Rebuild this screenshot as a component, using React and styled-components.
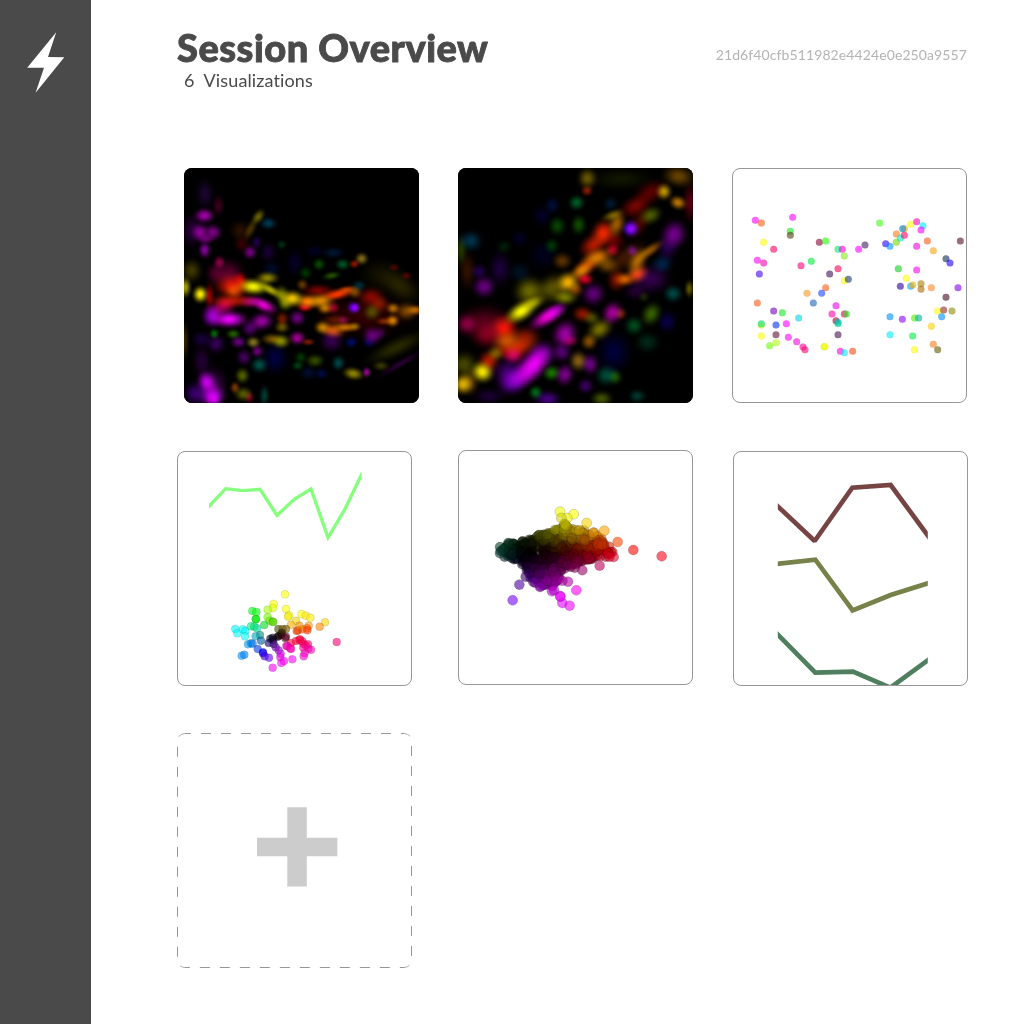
import React from 'react';
import styled, { createGlobalStyle } from 'styled-components';

const GlobalStyle = createGlobalStyle`
  * { box-sizing: border-box; }
  body { margin: 0; background: #fff; font-family: Lato, "Open Sans", sans-serif; color: #4a4a4a; }
`;

const Page = styled.div`
  display: flex;
  height: 1024px;
  overflow: hidden;
`;
const Sidebar = styled.nav`
  width: 91px;
  flex: none;
  padding: 32px 0 0 27px;
  background: #4a4a4a;
`;
const Logo = styled.svg`
  display: block;
  width: 38px;
  height: 61px;
`;
const Main = styled.main`
  flex: 1;
  padding: 25px 57px 0 86px;
`;
const Header = styled.header`
  display: flex;
  justify-content: space-between;
  height: 143px;
`;
const Title = styled.h1`
  margin: 0;
  font-size: 38px;
  line-height: 44px;
  font-weight: 900;
  letter-spacing: 0.5px;
  -webkit-text-stroke: 0.9px #4a4a4a;
  white-space: nowrap;
`;
const Count = styled.p`
  display: flex;
  gap: 9px;
  margin: 0 0 0 7px;
  font-size: 18px;
  line-height: 22px;
  letter-spacing: 0.12px;
`;
const SessionId = styled.span`
  padding: 21px 1px 0 0;
  font-size: 14px;
  line-height: 18px;
  letter-spacing: 0.1px;
  color: #b4b4b4;
`;
const Gallery = styled.section`
  display: grid;
  grid-template-columns: 281px 274px 236px;
  grid-template-rows: 282px 283px 235px;
  width: 791px;
`;
const Tile = styled.article`
  width: 235px;
  height: 235px;
  margin: ${(p) => p.$top || 0}px 0 0 ${(p) => p.$left || 0}px;
  border-radius: 8px;
  overflow: hidden;
`;
const ImageTile = styled(Tile)`
  background: #000;
`;
const ChartTile = styled(Tile)`
  border: 1px solid #979797;
  background: #fff;
`;
const Drawing = styled.svg`
  display: block;
  width: 100%;
  height: 100%;
`;
const Blob = styled.ellipse`
  mix-blend-mode: screen;
`;

/* x, y, rx, ry, angle, colour */
const fishBlobs = [
  [75,90,22,35,0,'#1b0530'],[115,125,14,25,0,'#3c001c'],[73,155,24,18,0,'#a000a8'],[60,205,20,22,0,'#8a0094'],[98,205,22,20,0,'#7c0085'],[78,225,20,12,0,'#600068'],[74,258,15,20,0,'#84009a'],[35,200,25,40,0,'#250034'],
  [235,158,13,20,35,'#666000'],[212,195,12,28,25,'#443100'],[180,200,25,24,0,'#291000'],[265,178,20,15,0,'#003752'],[210,265,17,17,0,'#71007e'],[230,235,12,17,0,'#200047'],[265,265,20,24,0,'#180034'],[185,240,20,20,0,'#330000'],[118,295,14,16,0,'#84003f'],[145,325,38,32,0,'#52002a'],[105,330,23,27,0,'#420020'],
  [35,320,25,28,0,'#3c3700'],[16,370,14,24,0,'#a69d00'],[61,391,18,20,0,'#fff000'],[88,395,12,30,0,'#900000'],[157,365,43,30,0,'#df1600'],[162,380,22,18,0,'#a84000'],[160,410,58,17,0,'#a81500'],[180,350,16,20,0,'#b50000'],
  [220,368,36,19,5,'#f6f600'],[262,342,27,15,0,'#8c8400'],[272,378,30,12,30,'#aaa500'],[306,393,18,23,-15,'#777b00'],[315,420,17,17,0,'#5d6800'],[337,404,27,20,0,'#f0c600'],[382,413,27,18,0,'#ff7700'],[422,411,32,18,0,'#d88400'],[367,362,14,14,0,'#643600'],[415,380,38,16,0,'#7a0500'],[471,391,43,14,-12,'#ff3700'],[500,377,22,10,-10,'#a83300'],[435,433,18,14,0,'#b86c00'],[375,430,18,11,0,'#d10016'],
  [250,423,35,16,25,'#e600d1'],[210,414,24,14,0,'#84005e'],[97,456,25,27,0,'#9c00d0'],[147,466,42,20,0,'#ed00ff'],[122,436,32,15,0,'#7b0048'],[135,420,28,16,0,'#a90028'],[245,472,28,21,-10,'#9800a1'],[210,493,20,20,0,'#4e0066'],
  [352,462,20,19,0,'#6b0078'],[352,522,20,17,0,'#a20091'],[385,534,16,9,0,'#791b00'],[307,465,16,18,0,'#721a00'],[306,490,18,14,0,'#605000'],[275,525,24,14,0,'#704c00'],[303,532,22,17,0,'#858900'],[220,535,17,14,0,'#82721b'],[175,534,19,15,0,'#65007c'],[232,562,15,15,0,'#6a0078'],
  [460,431,15,15,0,'#920028'],[466,469,32,15,0,'#4c1700'],[427,490,19,16,0,'#b27400'],[457,500,30,17,10,'#d05100'],[496,490,31,12,0,'#bd6b00'],[525,487,14,11,0,'#664f00'],[521,431,16,15,0,'#5800f5'],[526,431,9,10,0,'#5000c0'],[525,385,17,15,0,'#734200'],[574,399,33,24,0,'#810900'],[600,421,24,20,0,'#681500'],[576,444,21,20,0,'#304900'],[639,433,16,14,0,'#a96800'],[638,470,16,15,0,'#ce7b00'],[613,472,20,10,0,'#732500'],[680,442,28,22,0,'#794300'],[707,438,22,12,0,'#b05800'],
  [550,455,110,52,0,'#300000'],[455,530,29,28,0,'#37004e'],[490,468,14,11,0,'#530041'],[577,515,23,22,0,'#65007d'],[603,507,14,15,0,'#30003c'],[514,535,15,14,0,'#000b62'],[566,536,16,14,0,'#000443'],[537,365,17,14,0,'#002a36'],
  [417,301,15,15,0,'#064900'],[455,335,22,10,-10,'#204f00'],[488,301,18,14,0,'#005022'],[523,300,12,11,0,'#8e1200'],[545,284,16,15,0,'#80681a'],[460,266,25,14,0,'#001532'],[377,327,15,16,0,'#003400'],[305,242,12,12,0,'#002c12'],[405,260,25,15,0,'#000023'],[345,295,22,32,0,'#060024'],[275,315,23,20,0,'#000a26'],[610,335,55,38,10,'#161300'],[665,370,50,32,30,'#232000'],[642,310,13,9,0,'#440000'],[680,335,13,10,0,'#4b0000'],
  [103,509,12,12,0,'#006800'],[160,510,17,12,0,'#245b00'],[108,540,23,23,0,'#330056'],[65,525,24,20,0,'#180039'],[192,580,18,20,0,'#43005e'],[65,592,22,40,0,'#220033'],[238,603,20,19,0,'#004f45'],[285,583,32,37,0,'#00003f'],[362,580,15,15,0,'#033600'],[405,590,22,16,0,'#304b00'],[475,597,16,18,0,'#004546'],[425,629,17,14,0,'#000a41'],[385,627,20,16,0,'#000e31'],[353,605,15,12,0,'#003c10'],[520,629,25,15,10,'#8e8400'],[560,625,10,13,0,'#9b0095'],[603,606,20,12,0,'#373600'],[650,550,78,22,-25,'#282800'],[660,600,60,9,-30,'#280032'],
  [187,635,17,19,0,'#536000'],[165,671,12,15,0,'#793600'],[190,690,21,18,0,'#535900'],[208,700,12,15,0,'#680017'],[253,695,12,25,0,'#003c31'],[80,655,22,27,-20,'#bf00e8'],[97,697,30,28,0,'#b000e2'],[100,705,17,17,0,'#9000a9'],[48,688,30,28,0,'#39006d'],[100,665,32,45,0,'#400050'],[15,530,10,45,0,'#352300'],
];
const zoomBlobs = [
  [400,43,22,24,0,'#675300'],[399,80,14,13,0,'#811b00'],[368,116,19,18,0,'#005825'],[310,186,20,22,0,'#074300'],[374,183,18,23,0,'#104a00'],[293,245,17,18,0,'#003400'],[295,124,18,20,0,'#000c35'],[265,155,24,24,0,'#000026'],[470,119,17,17,0,'#00172e'],[500,45,75,25,0,'#101500'],[674,37,37,25,10,'#664100'],[630,83,18,19,0,'#b49400'],[672,116,20,16,20,'#bb7400'],[708,115,17,45,0,'#53000f'],[590,154,27,20,-25,'#475900'],[545,127,38,24,-25,'#760500'],[590,85,40,26,-25,'#590000'],
  [660,212,30,34,20,'#72008a'],[640,253,24,30,0,'#210044'],[625,300,25,22,0,'#002145'],[530,194,20,20,0,'#6505ff'],[530,195,12,12,0,'#3a00a0'],[488,180,20,32,15,'#9b5b00'],[475,154,25,12,-20,'#665600'],[448,207,27,31,20,'#ee2400'],[418,242,36,24,-35,'#af1700'],[475,258,17,16,0,'#aa001f'],[432,279,35,21,-15,'#cb6900'],[398,306,40,20,-38,'#c34600'],[382,321,25,16,-30,'#a75d00'],[342,355,27,24,-30,'#f0ad00'],[393,345,20,15,0,'#d60024'],[459,303,27,20,0,'#684000'],[482,230,25,22,0,'#5c0000'],[515,280,55,27,-35,'#401800'],[550,293,20,35,30,'#ab6400'],[587,260,36,13,-35,'#8d5100'],[512,346,22,16,0,'#ce5b00'],[550,331,28,20,-28,'#e43d00'],[488,348,22,27,0,'#7c1300'],[535,260,14,14,0,'#550072'],[555,180,22,36,30,'#440600'],
  [325,291,23,20,0,'#593100'],[50,231,27,24,0,'#003149'],[20,260,15,35,0,'#203400'],[40,320,20,45,0,'#311100'],[150,248,18,16,0,'#001c07'],[197,225,22,20,0,'#000020'],[137,315,26,40,0,'#1c003c'],[90,368,27,26,0,'#65007d'],[75,322,19,18,0,'#20004b'],[197,325,28,24,0,'#001022'],[267,274,35,35,0,'#00001c'],
  [223,380,35,32,-40,'#605d00'],[263,388,47,32,-15,'#282500'],[300,368,35,30,-30,'#4d4600'],[333,400,29,18,0,'#747700'],[365,375,18,18,0,'#853b00'],[202,442,40,21,-32,'#fffa00'],[238,417,28,15,-25,'#7e7b00'],[280,458,47,19,-32,'#e600cd'],[300,444,30,16,-30,'#8500a6'],[332,510,28,33,30,'#9b00a3'],[348,530,20,15,0,'#770034'],[323,565,23,22,0,'#540070'],[418,390,28,27,-30,'#5e0075'],[385,450,23,19,0,'#8a1400'],[475,447,23,27,25,'#a50099'],[500,449,15,15,0,'#662200'],[437,496,31,23,-30,'#777000'],[405,533,19,19,0,'#834d00'],[413,462,20,17,0,'#474900'],[373,591,21,24,0,'#835f13'],[408,601,20,25,0,'#6a0082'],[332,632,22,26,15,'#780086'],[395,666,19,19,0,'#38005d'],
  [657,389,22,20,0,'#004644'],[706,374,11,20,0,'#5c5500'],[592,450,22,28,30,'#366000'],[540,485,22,22,0,'#004a1b'],[640,473,23,26,0,'#070045'],[580,535,28,24,0,'#002816'],[480,565,40,48,0,'#000039'],[457,634,25,24,0,'#004a36'],[484,639,17,18,0,'#1b4800'],[443,704,25,18,0,'#405300'],[550,696,20,16,0,'#00372c'],[590,345,45,34,0,'#31004b'],[544,382,27,22,0,'#21002f'],[570,399,13,13,0,'#152400'],
  [92,477,60,42,0,'#590019'],[38,480,25,25,0,'#750038'],[100,515,37,31,0,'#700014'],[150,493,32,32,0,'#f51500'],[157,530,34,23,-15,'#b64c00'],[197,545,46,24,-15,'#b92700'],[213,515,35,22,0,'#711000'],[170,560,40,22,0,'#830000'],[178,575,25,20,0,'#a90058'],[125,568,20,18,0,'#635900'],[104,592,24,25,0,'#b51a00'],[240,600,55,30,-50,'#e600f5'],[215,625,45,25,-45,'#8000a0'],[178,653,38,29,-25,'#7100b8'],[165,625,40,32,0,'#40006d'],[265,570,32,28,0,'#40006d'],[85,624,26,24,20,'#f8e900'],[26,661,22,23,0,'#d4a600'],[30,602,32,30,0,'#454500'],[45,655,22,29,0,'#6e4800'],[293,627,20,18,-20,'#187200'],[245,685,16,16,0,'#006615'],[281,705,31,20,0,'#43007c'],[105,697,36,20,0,'#1a0030'],
];

/* x, y, fill */
const mapDots = [
  [82,169,'#f0f'],[100,177,'#ff5a16'],[194,160,'#f0f'],[187,202,'#10ef20'],[187,214,'#554016'],[107,235,'#ff0'],[137,256,'#ff0060'],[274,235,'#8b0030'],[293,231,'#20ff00'],[330,256,'#00ef77'],[343,256,'#ff00d8'],[349,276,'#80ef10'],[392,256,'#f0f'],[411,243,'#412060'],[88,289,'#f0f'],[107,297,'#ff00b0'],[94,330,'#4500ff'],[219,305,'#ff007a'],[250,292,'#00ed3b'],[330,314,'#ff0050'],[305,330,'#40105b'],[349,350,'#ff0'],[361,346,'#173a70'],[293,371,'#ff5a10'],[281,388,'#1745ff'],[237,388,'#ff9720'],[256,417,'#1565bd'],[88,417,'#ff5a16'],[137,441,'#7600c0'],[163,446,'#10ef20'],[212,462,'#00d5e2'],[100,483,'#d0ef00'],[100,479,'#00e780'],[144,483,'#0030ff'],[175,479,'#f0f'],[100,516,'#ff0'],[144,512,'#5b1035'],[181,520,'#f0f'],[206,533,'#ff00e0'],[144,536,'#b0ff00'],[125,545,'#70ff00'],[225,549,'#ff0095'],[231,557,'#ff0075'],[324,425,'#f000f0'],[312,450,'#ff00aa'],[349,450,'#ef0055'],[355,450,'#20e520'],[324,470,'#b00030'],[330,479,'#00df90'],[330,475,'#00c0b5'],[330,512,'#471050'],[288,548,'#ef0'],[291,548,'#ef0'],[337,562,'#ff00df'],[349,566,'#00eaff'],[374,562,'#ff4b10'],
  [455,177,'#40ff10'],[473,239,'#2200ff'],[486,247,'#0095ff'],[505,235,'#79d900'],[505,210,'#ff7b10'],[517,222,'#00efcf'],[529,214,'#ff006b'],[529,194,'#ffb000'],[524,194,'#008bdf'],[548,181,'#ff0'],[566,173,'#ff00bb'],[585,185,'#00eaff'],[579,198,'#f0f'],[598,231,'#ff5a16'],[566,247,'#f000e0'],[616,260,'#ffa510'],[697,231,'#501028'],[654,284,'#102c50'],[666,297,'#2000ff'],[511,314,'#10cb20'],[566,318,'#ff00f0'],[535,343,'#ff0'],[517,367,'#2700a0'],[548,367,'#00a5ff'],[554,363,'#efb000'],[579,359,'#a68000'],[579,376,'#b06b00'],[610,371,'#ff8920'],[690,371,'#8500ff'],[654,400,'#430c20'],[629,441,'#ff0'],[647,438,'#952a22'],[672,441,'#8b8c00'],[641,458,'#008dff'],[486,458,'#0091ff'],[523,466,'#9000ff'],[560,462,'#50ef00'],[572,462,'#00b49f'],[610,487,'#ffd000'],[486,512,'#00eaff'],[554,516,'#00ef48'],[560,557,'#ff0'],[616,541,'#ff7b16'],[629,557,'#625b00'],
];
const clusterDots = [
  [195,43,'#ff0'],[161,72,'#ff0'],[159,84,'#e5ff00'],[143,89,'#aaff00'],[198,87,'#ff0'],[97,93,'#0f2'],[109,96,'#0f0'],[107,117,'#00f510'],[108,118,'#00e800'],[143,112,'#70ff00'],[149,122,'#66ed00'],[158,125,'#4bd500'],[160,126,'#5bd500'],[207,106,'#ff0'],[204,110,'#eee900'],[228,122,'#f2d500'],[245,102,'#ff0'],[257,107,'#ffe800'],[271,113,'#ffeb00'],[315,127,'#ffd500'],[299,140,'#ff8500'],[266,137,'#ff9500'],[213,134,'#ffae00'],[261,145,'#ff6b00'],[246,148,'#ff6200'],[234,151,'#ff4500'],[262,151,'#ff3900'],[230,153,'#e53f00'],[238,137,'#ef8e00'],
  [46,147,'#00f5ff'],[52,160,'#0ff'],[69,148,'#0ff'],[76,153,'#00f7ff'],[75,169,'#0ff'],[93,139,'#00ef80'],[103,140,'#00e562'],[111,145,'#00dda0'],[133,135,'#00dd20'],[120,165,'#008b77'],[107,169,'#00a7bd'],[123,182,'#0058a0'],[84,193,'#00a0f0'],[93,190,'#0085ef'],[98,191,'#0078ee'],[65,227,'#0094ff'],[73,224,'#0080ff'],[113,207,'#0039e0'],[129,217,'#0200ee'],[129,220,'#1800ff'],[134,229,'#3900df'],[147,233,'#6100ff'],[146,189,'#150068'],[151,176,'#000329'],[160,180,'#000020'],[173,170,'#130008'],[177,167,'#120000'],[184,165,'#230000'],[175,147,'#484400'],[188,147,'#655000'],[198,147,'#725400'],[185,159,'#1c1500'],[198,170,'#6b0019'],[196,174,'#500022'],[158,173,'#090012'],[213,189,'#f03'],[228,183,'#f04'],[240,178,'#ff0035'],[238,180,'#ff0040'],[247,184,'#ff0050'],[250,191,'#ff0058'],[257,196,'#ff0075'],[264,193,'#ff0070'],[250,203,'#ff009a'],[265,206,'#ff00a6'],[273,209,'#ff00b6'],[254,220,'#ff00c0'],[251,229,'#ff00d7'],[199,197,'#ff00c0'],[202,199,'#e500b5'],[213,207,'#ff00bf'],[211,205,'#f0a'],[176,211,'#a500db'],[182,221,'#ca00de'],[181,232,'#ed00ef'],[184,249,'#f0f'],[192,243,'#ff00f0'],[217,238,'#f0f'],[158,263,'#ff00f0'],[167,202,'#6900aa'],[161,192,'#380078'],[350,186,'#ff0077'],
];

const outline = [[50,165],[75,143],[115,138],[165,118],[215,105],[240,88],[265,100],[300,103],[330,110],[352,128],[375,152],[385,168],[365,182],[325,188],[295,195],[260,212],[230,225],[225,250],[205,270],[170,270],[140,245],[115,205],[90,190],[62,182]];
const strays = [[228,47],[269,55],[250,66],[232,66],[308,81],[361,104],[401,138],[448,162],[533,181],[389,183],[376,182],[347,209],[295,223],[272,215],[277,283],[252,257],[235,254],[235,321],[257,329],[229,300],[229,302],[106,266],[86,313],[48,153],[48,172],[73,141],[116,136],[166,117],[190,116],[328,110],[204,286],[148,258],[154,260],[168,273],[210,282],[125,242],[213,102],[242,84],[245,89],[286,103]];

function inside(x, y) {
  let hit = false;
  outline.forEach(([x1, y1], i) => {
    const [x2, y2] = outline[(i + outline.length - 1) % outline.length];
    if (y1 > y !== y2 > y && x < ((x2 - x1) * (y - y1)) / (y2 - y1) + x1) hit = !hit;
  });
  return hit;
}
/* angle, hue, distance of full brightness */
const hueStops = [[0,358,290],[0.01,-2,290],[6,16,270],[15,38,235],[26,51,200],[39,60,165],[60,66,150],[90,75,160],[120,110,165],[150,145,170],[180,165,200],[200,205,180],[225,256,140],[270,275,135],[300,292,155],[322,303,185],[341,318,240],[350,335,270],[360,358,290]];
function dotColor(x, y) {
  const dx = x - 130;
  const dy = 168 - y;
  const a = ((Math.atan2(dy, dx) * 180) / Math.PI + 360) % 360;
  const i = hueStops.findIndex((s, n) => n > 0 && s[0] > a);
  const [a1, h1, r1] = hueStops[i - 1];
  const [a2, h2, r2] = hueStops[i];
  const t = (a - a1) / (a2 - a1);
  const v = Math.min(1, Math.hypot(dx, dy) / (r1 + (r2 - r1) * t)) ** 1.5;
  const sat = dx < 0 && dy > -20 ? 70 : 100;
  return `hsl(${h1 === 358 ? 358 : h1 + (h2 - h1) * t} ${sat}% ${v * 50}%)`;
}
function buildCloud() {
  let seed = 17;
  const rand = () => {
    seed = (seed * 16807) % 2147483647;
    return seed / 2147483647;
  };
  const pts = [];
  while (pts.length < 460) {
    const x = 45 + rand() * 345;
    const y = 85 + rand() * 190;
    if (inside(x, y)) pts.push([x, y]);
  }
  return [...outline, ...pts, ...strays].map(([x, y]) => [x, y, dotColor(x, y)]);
}
const cloudDots = buildCloud();

function Heatmap({ id, blobs, spread }) {
  return (
    <Drawing viewBox="12 12 705 705">
      <defs>
        {blobs.map((b, i) => (
          <radialGradient key={i} id={`${id}${i}`}>
            <stop offset="0" stopColor={b[5]} />
            <stop offset="0.2" stopColor={b[5]} stopOpacity="0.9" />
            <stop offset="0.4" stopColor={b[5]} stopOpacity="0.63" />
            <stop offset="0.6" stopColor={b[5]} stopOpacity="0.32" />
            <stop offset="0.8" stopColor={b[5]} stopOpacity="0.09" />
            <stop offset="1" stopColor={b[5]} stopOpacity="0" />
          </radialGradient>
        ))}
      </defs>
      <rect x="12" y="12" width="705" height="705" fill="#000" />
      {blobs.map(([x, y, rx, ry, r], i) => (
        <Blob key={i} cx={x} cy={y} rx={rx * spread} ry={ry * spread} fill={`url(#${id}${i})`} transform={`rotate(${r} ${x} ${y})`} />
      ))}
    </Drawing>
  );
}

function Dots({ x, y, r, items, edge = 0.25 }) {
  return (
    <g transform={`translate(${x} ${y}) scale(0.33333)`} stroke="#000" strokeOpacity={edge} strokeWidth="1.5" fillOpacity="0.6">
      {items.map(([cx, cy, fill], i) => (
        <circle key={i} cx={cx} cy={cy} r={r} fill={fill} />
      ))}
    </g>
  );
}

export default function App() {
  return (
    <Page>
      <GlobalStyle />
      <Sidebar>
        <Logo viewBox="27 32 38 61">
          <path d="M56.2 32.2 48 57 64.3 57.3 35.6 92.8 44 67.7 27.2 67.7Z" fill="#fff" />
        </Logo>
      </Sidebar>
      <Main>
        <Header>
          <div>
            <Title>Session Overview</Title>
            <Count><span>6</span><span>Visualizations</span></Count>
          </div>
          <SessionId>21d6f40cfb511982e4424e0e250a9557</SessionId>
        </Header>
        <Gallery>
          <ImageTile $left={7}><Heatmap id="fish" blobs={fishBlobs} spread={1.6} /></ImageTile>
          <ImageTile><Heatmap id="detail" blobs={zoomBlobs} spread={1.65} /></ImageTile>
          <ChartTile>
            <Drawing viewBox="733 169 233 233">
              <Dots x={728} y={164} r={10.5} items={mapDots} edge={0.08} />
            </Drawing>
          </ChartTile>
          <ChartTile $top={1}>
            <Drawing viewBox="178 452 233 233">
              <clipPath id="trace"><rect x="209" y="460" width="152.6" height="90" /></clipPath>
              <g clipPath="url(#trace)">
                <path transform="translate(174 446) scale(0.33333)" d="M99 187 155 128 207 134 258 130 309 208 361 160 411 129 462 275 513 189 566 79" fill="none" stroke="#86ff7d" strokeWidth="10" />
              </g>
              <Dots x={220} y={580} r={12} items={clusterDots} edge={0.2} />
            </Drawing>
          </ChartTile>
          <ChartTile>
            <Drawing viewBox="459 451 233 233">
              <Dots x={484} y={496} r={15} items={cloudDots} edge={0.3} />
            </Drawing>
          </ChartTile>
          <ChartTile $top={1} $left={1}>
            <Drawing viewBox="734 452 233 233">
              <clipPath id="series"><rect x="777.8" y="470" width="150" height="220" /></clipPath>
              <g clipPath="url(#series)">
                <g transform="translate(728 446) scale(0.33333)" fill="none" strokeWidth="14">
                  <path d="M143 175 260 285 373 125 488 117 605 276" stroke="#774444" strokeMiterlimit="1.3" />
                  <path d="M143 354 262 341 374 493 488 447 605 410" stroke="#76824a" />
                  <path d="M143 559 262 680 375 677 487 725 605 639" stroke="#4f7f5f" />
                </g>
              </g>
            </Drawing>
          </ChartTile>
          <Tile>
            <Drawing viewBox="177 733 235 235">
              <rect x="177.5" y="733.5" width="234" height="234" rx="7" fill="none" stroke="#979797" strokeDasharray="10 10" strokeDashoffset="3.5" />
              <path d="M287.3 807.3H306.8V837.8H337.4V856.2H306.8V886.4H287.3V856.2H257V837.8H287.3Z" fill="#ccc" />
            </Drawing>
          </Tile>
        </Gallery>
      </Main>
    </Page>
  );
}
